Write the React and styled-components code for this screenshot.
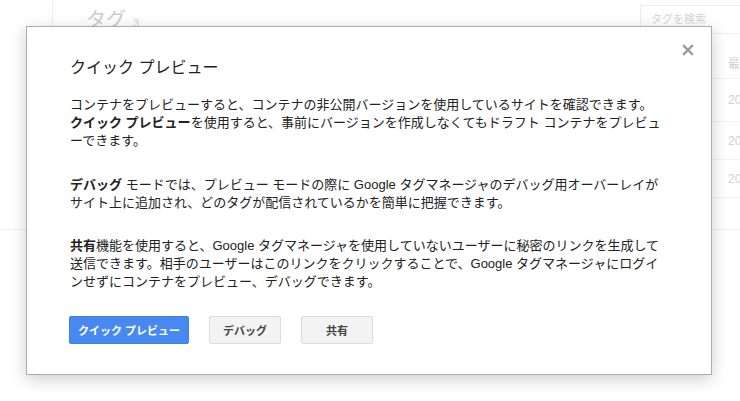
import React from "react";
import styled, { createGlobalStyle } from "styled-components";

const Global = createGlobalStyle`
  html, body { margin: 0; padding: 0; background: #fff; overflow: hidden; }
  body {
    font-family: "Liberation Sans", Arial, "Noto Sans CJK JP", sans-serif;
    color: #222;
  }
  * { box-sizing: border-box; }
`;

const Page = styled.div`
  position: relative;
  width: 740px;
  height: 401px;
  overflow: hidden;
`;

const Backdrop = styled.div`
  display: flex;
  height: 230px;
  border-bottom: 1px solid #efefef;
`;

const Gutter = styled.div`
  width: 53px;
  border-right: 1px solid #f0f0f0;
`;

const Main = styled.div`
  flex: 1;
  display: flex;
  justify-content: space-between;
`;

const Heading = styled.div`
  padding: 9px 0 0 33px;
  font-size: 20px;
  line-height: 22px;
  color: #cdcdcd;
  font-family: "Liberation Sans", "Noto Sans CJK JP", sans-serif;
`;

const Count = styled.span`
  font-size: 11px;
  margin-left: 7px;
  color: #d3d3d3;
`;

const Side = styled.div`
  width: 100px;
  padding-top: 5px;
`;

const SearchBox = styled.div`
  height: 29px;
  border: 1px solid #eeeeee;
  border-right: none;
  padding: 0 0 0 10px;
  font-size: 11px;
  line-height: 27px;
  color: #d6d6d6;
  white-space: nowrap;
`;

const Row = styled.div`
  height: ${(p) => p.$h}px;
  margin-top: ${(p) => p.$mt || 0}px;
  border-bottom: 1px solid #f2f2f2;
  padding-left: 88px;
  display: flex;
  align-items: center;
  font-size: 12px;
  color: #d0d0d0;
  white-space: nowrap;
  overflow: hidden;
`;

const Overlay = styled.div`
  position: absolute;
  inset: 0;
  padding: 26px 0 0 26px;
`;

const Modal = styled.div`
  position: relative;
  width: 686px;
  background: #fff;
  border: 1px solid #acacac;
  box-shadow: 0 4px 16px rgba(0, 0, 0, 0.2);
  padding: 31px 30px 30px 43px;
`;

const Close = styled.button`
  position: absolute;
  top: 17px;
  right: 17px;
  width: 12px;
  height: 12px;
  padding: 0;
  border: none;
  background: transparent;
  display: flex;
  cursor: pointer;
`;

const Title = styled.h2`
  margin: 0 0 18px;
  font-size: 16px;
  line-height: 20px;
  font-weight: normal;
  color: #222;
`;

const Para = styled.p`
  margin: 0 0 ${(p) => (p.$last ? 0 : 25)}px;
  font-size: 13px;
  line-height: 18.2px;
  color: #222;
  white-space: nowrap;
`;

const Buttons = styled.div`
  display: flex;
  gap: 20px;
  margin-top: 24px;
  margin-left: -1px;
`;

const Button = styled.button`
  height: 28px;
  width: ${(p) => p.$w}px;
  padding: 0;
  border-radius: 2px;
  font-family: "Liberation Sans", "Noto Sans CJK JP", sans-serif;
  font-size: 11px;
  font-weight: bold;
  border: 1px solid ${(p) => (p.$primary ? "#3f7fe6" : "#dcdcdc")};
  background: ${(p) => (p.$primary ? "#4889f1" : "#f3f3f3")};
  color: ${(p) => (p.$primary ? "#fff" : "#444")};
  cursor: pointer;
`;

export default function App() {
  return (
    <Page>
      <Global />
      <Backdrop>
        <Gutter />
        <Main>
          <Heading>
            タグ<Count>3</Count>
          </Heading>
          <Side>
            <SearchBox>タグを検索</SearchBox>
            <Row $h={32} $mt={13}>最終更新</Row>
            <Row $h={43}>2017/01</Row>
            <Row $h={38}>2017/01</Row>
            <Row $h={38}>2017/01</Row>
          </Side>
        </Main>
      </Backdrop>
      <Overlay>
        <Modal>
          <Close aria-label="閉じる">
            <svg width="12" height="12" viewBox="0 0 12 12">
              <path
                d="M2 2 L10 10 M10 2 L2 10"
                stroke="#9a9a9a"
                strokeWidth="2.4"
                strokeLinecap="square"
              />
            </svg>
          </Close>
          <Title>クイック プレビュー</Title>
          <Para>
            コンテナをプレビューすると、コンテナの非公開バージョンを使用しているサイトを確認できます。
            <br />
            <b>クイック プレビュー</b>を使用すると、事前にバージョンを作成しなくてもドラフト コンテナをプレビュ
            <br />
            ーできます。
          </Para>
          <Para>
            <b>デバッグ</b> モードでは、プレビュー モードの際に Google タグマネージャのデバッグ用オーバーレイが
            <br />
            サイト上に追加され、どのタグが配信されているかを簡単に把握できます。
          </Para>
          <Para $last>
            <b>共有</b>機能を使用すると、Google タグマネージャを使用していないユーザーに秘密のリンクを生成して
            <br />
            送信できます。相手のユーザーはこのリンクをクリックすることで、Google タグマネージャにログイ
            <br />
            ンせずにコンテナをプレビュー、デバッグできます。
          </Para>
          <Buttons>
            <Button $primary $w={120}>クイック プレビュー</Button>
            <Button $w={72}>デバッグ</Button>
            <Button $w={72}>共有</Button>
          </Buttons>
        </Modal>
      </Overlay>
    </Page>
  );
}
